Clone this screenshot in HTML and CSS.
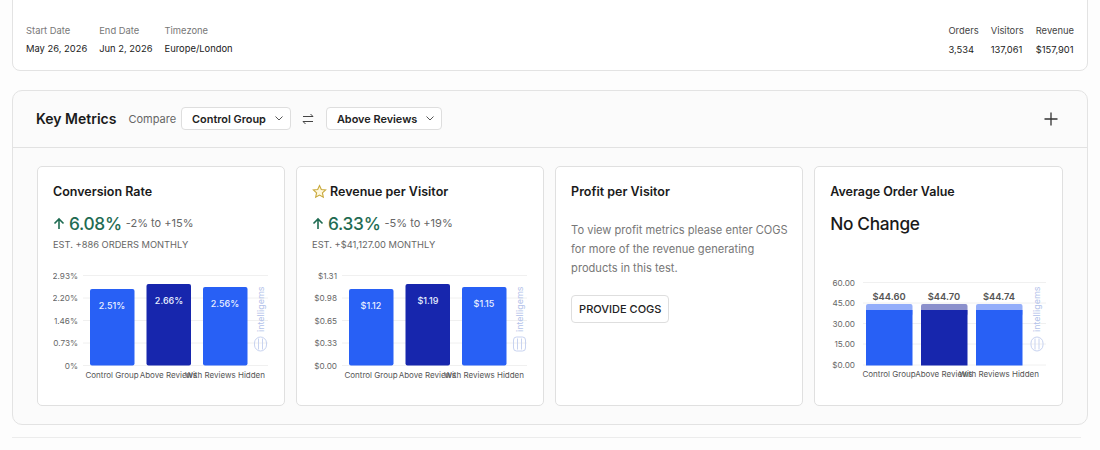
FILE: index.html
```html
<!DOCTYPE html>
<html lang="en">
<head>
    <meta charset="UTF-8">
    <title>Test Results</title>
    <link rel="stylesheet" href="styles.css">
</head>
<body>
    <section class="summary">
        <div class="summary-group">
            <div class="stat"><span class="stat-label">Start Date</span><span class="stat-value">May 26, 2026</span></div>
            <div class="stat"><span class="stat-label">End Date</span><span class="stat-value">Jun 2, 2026</span></div>
            <div class="stat"><span class="stat-label">Timezone</span><span class="stat-value">Europe/London</span></div>
        </div>
        <div class="summary-group totals">
            <div class="stat"><span class="stat-label">Orders</span><span class="stat-value">3,534</span></div>
            <div class="stat"><span class="stat-label">Visitors</span><span class="stat-value">137,061</span></div>
            <div class="stat"><span class="stat-label">Revenue</span><span class="stat-value">$157,901</span></div>
        </div>
    </section>

    <section class="panel">
        <header class="panel-header">
            <h2>Key Metrics</h2>
            <span class="compare-label">Compare</span>
            <button type="button" class="dropdown">Control Group
                <svg width="8" height="5" viewBox="0 0 8 5"><path class="chevron" d="M0.5 0.5L4 4l3.5-3.5"/></svg>
            </button>
            <svg class="swap" width="12" height="12" viewBox="0 0 12 12"><path class="icon-line" d="M1 3.5h10M8.5 1L11 3.5M11 8.5H1M3.5 11L1 8.5"/></svg>
            <button type="button" class="dropdown">Above Reviews
                <svg width="8" height="5" viewBox="0 0 8 5"><path class="chevron" d="M0.5 0.5L4 4l3.5-3.5"/></svg>
            </button>
            <svg class="plus" width="14" height="14" viewBox="0 0 14 14"><path class="plus-line" d="M7 0.5v13M0.5 7h13"/></svg>
        </header>

        <div class="cards">
            <article class="card">
                <h3>Conversion Rate</h3>
                <div class="metric">
                    <svg width="12" height="13" viewBox="0 0 12 13"><path class="arrow" d="M6 12V2M1.5 6.5L6 2l4.5 4.5"/></svg>
                    <span class="metric-value">6.08%</span>
                    <span class="metric-range">-2% to +15%</span>
                </div>
                <p class="estimate">EST. +886 ORDERS MONTHLY</p>
                <svg class="chart" width="216" height="120" viewBox="0 0 216 120">
                    <path class="grid" d="M30 10.5H215M30 33H215M30 55.5H215M30 78H215M30 100.5H215"/>
                    <text class="axis" x="25" y="13.5">2.93%</text>
                    <text class="axis" x="25" y="36">2.20%</text>
                    <text class="axis" x="25" y="58.5">1.46%</text>
                    <text class="axis" x="25" y="81">0.73%</text>
                    <text class="axis" x="25" y="103.5">0%</text>
                    <rect class="bar" x="37" y="24" width="44.5" height="76.5" rx="2"/>
                    <rect class="bar bar-dark" x="93.5" y="19" width="44.5" height="81.5" rx="2"/>
                    <rect class="bar" x="150" y="22" width="44.5" height="78.5" rx="2"/>
                    <text class="bar-text" x="59" y="43.5">2.51%</text>
                    <text class="bar-text" x="116" y="38.5">2.66%</text>
                    <text class="bar-text" x="172" y="41.5">2.56%</text>
                    <text class="tick" x="59" y="112.5">Control Group</text>
                    <text class="tick" x="115.5" y="112.5">Above Reviews</text>
                    <text class="tick" x="172" y="112.5">With Reviews Hidden</text>
                    <text class="brand" transform="translate(211 67) rotate(-90)">intelligems</text>
                    <g class="brand-mark" transform="translate(201.5 72)">
                        <rect x="0" y="0" width="12" height="14" rx="6"/>
                        <path d="M4 1.5v11M8 1.5v11"/>
                    </g>
                </svg>
            </article>

            <article class="card">
                <h3><svg class="star" width="15" height="15" viewBox="0 0 24 24"><path d="M12 2.5l2.9 6.3 6.9.8-5.1 4.7 1.4 6.8-6.1-3.4-6.1 3.4 1.4-6.8-5.1-4.7 6.9-.8z"/></svg>Revenue per Visitor</h3>
                <div class="metric">
                    <svg width="12" height="13" viewBox="0 0 12 13"><path class="arrow" d="M6 12V2M1.5 6.5L6 2l4.5 4.5"/></svg>
                    <span class="metric-value">6.33%</span>
                    <span class="metric-range">-5% to +19%</span>
                </div>
                <p class="estimate">EST. +$41,127.00 MONTHLY</p>
                <svg class="chart" width="216" height="120" viewBox="0 0 216 120">
                    <path class="grid" d="M30 10.5H215M30 33H215M30 55.5H215M30 78H215M30 100.5H215"/>
                    <text class="axis" x="25" y="13.5">$1.31</text>
                    <text class="axis" x="25" y="36">$0.98</text>
                    <text class="axis" x="25" y="58.5">$0.65</text>
                    <text class="axis" x="25" y="81">$0.33</text>
                    <text class="axis" x="25" y="103.5">$0.00</text>
                    <rect class="bar" x="37" y="24" width="44.5" height="76.5" rx="2"/>
                    <rect class="bar bar-dark" x="93.5" y="19" width="44.5" height="81.5" rx="2"/>
                    <rect class="bar" x="150" y="22" width="44.5" height="78.5" rx="2"/>
                    <text class="bar-text" x="59" y="43.5">$1.12</text>
                    <text class="bar-text" x="116" y="38.5">$1.19</text>
                    <text class="bar-text" x="172" y="41.5">$1.15</text>
                    <text class="tick" x="59" y="112.5">Control Group</text>
                    <text class="tick" x="115.5" y="112.5">Above Reviews</text>
                    <text class="tick" x="172" y="112.5">With Reviews Hidden</text>
                    <text class="brand" transform="translate(211 67) rotate(-90)">intelligems</text>
                    <g class="brand-mark" transform="translate(201.5 72)">
                        <rect x="0" y="0" width="12" height="14" rx="3"/>
                        <path d="M4 1.5v11M8 1.5v11"/>
                    </g>
                </svg>
            </article>

            <article class="card">
                <h3>Profit per Visitor</h3>
                <p class="card-note">To view profit metrics please enter COGS for more of the revenue generating products in this test.</p>
                <button type="button" class="cogs-btn">PROVIDE COGS</button>
            </article>

            <article class="card">
                <h3>Average Order Value</h3>
                <div class="metric">
                    <span class="metric-value neutral">No Change</span>
                </div>
                <p class="estimate">&nbsp;</p>
                <svg class="chart" width="216" height="120" viewBox="0 0 216 120">
                    <path class="grid" d="M33 17.5H217M33 38H217M33 58.5H217M33 79H217M33 100H217"/>
                    <text class="axis" x="25" y="20.5">60.00</text>
                    <text class="axis" x="25" y="41">45.00</text>
                    <text class="axis" x="25" y="61.5">30.00</text>
                    <text class="axis" x="25" y="82">15.00</text>
                    <text class="axis" x="25" y="103">$0.00</text>
                    <rect class="bar-cap" x="36" y="39" width="46.5" height="12" rx="2"/>
                    <rect class="bar-cap cap-dark" x="91" y="39" width="46.5" height="12" rx="2"/>
                    <rect class="bar-cap" x="146" y="39" width="46.5" height="12" rx="2"/>
                    <rect class="bar-flat" x="36" y="45" width="46.5" height="55.5"/>
                    <rect class="bar-flat bar-dark" x="91" y="45" width="46.5" height="55.5"/>
                    <rect class="bar-flat" x="146" y="45" width="46.5" height="55.5"/>
                    <text class="bar-top" x="59" y="35">$44.60</text>
                    <text class="bar-top" x="114" y="35">$44.70</text>
                    <text class="bar-top" x="169" y="35">$44.74</text>
                    <text class="tick" x="59" y="111.5">Control Group</text>
                    <text class="tick" x="114" y="111.5">Above Reviews</text>
                    <text class="tick" x="169" y="111.5">With Reviews Hidden</text>
                    <text class="brand" transform="translate(210 67) rotate(-90)">intelligems</text>
                    <g class="brand-mark" transform="translate(201 72)">
                        <rect x="0" y="0" width="12" height="14" rx="6"/>
                        <path d="M4 1.5v11M8 1.5v11"/>
                    </g>
                </svg>
            </article>
        </div>
    </section>

    <hr class="divider">
</body>
</html>
```

FILE: styles.css
```css
* {
    box-sizing: border-box;
}

body {
    margin: 0;
    padding: 0 12px;
    height: 450px;
    overflow: hidden;
    font-family: Inter, "Liberation Sans", sans-serif;
    background: #fdfdfd;
    color: #1a1a1a;
}

/* top strip */
.summary {
    display: flex;
    justify-content: space-between;
    height: 81px;
    margin-top: -10px;
    padding: 34px 13px 0;
    background: #ffffff;
    border: 1px solid #e3e3e3;
    border-radius: 8px;
}

.summary-group {
    display: flex;
    gap: 12px;
}

.stat {
    display: flex;
    flex-direction: column;
    gap: 6px;
    font-size: 9.4px;
    line-height: 12px;
}

.stat-label {
    color: #777777;
}

.stat-value {
    color: #222222;
}

.totals .stat {
    gap: 7px;
}

.totals .stat-label {
    color: #444444;
}

/* key metrics panel */
.panel {
    height: 335px;
    margin-top: 19px;
    background: #fbfbfb;
    border: 1px solid #e3e3e3;
    border-radius: 10px;
}

.panel-header {
    display: flex;
    align-items: center;
    height: 57px;
    padding: 0 29px 1px 23px;
    border-bottom: 1px solid #e2e2e2;
}

.panel-header h2 {
    margin: 0 12px 0 0;
    font-size: 14px;
    font-weight: 600;
}

.compare-label {
    margin-right: 5px;
    font-size: 11px;
    color: #666666;
}

.dropdown {
    display: flex;
    align-items: center;
    justify-content: space-between;
    gap: 9px;
    height: 23px;
    padding: 0 7px 0 10px;
    font-family: inherit;
    font-size: 10.9px;
    font-weight: 600;
    color: #222222;
    background: #ffffff;
    border: 1px solid #dedede;
    border-radius: 4px;
}

.chevron {
    fill: none;
    stroke: #555555;
    stroke-width: 1;
}

.swap {
    margin: 0 12px 0 11px;
}

.icon-line {
    fill: none;
    stroke: #444444;
    stroke-width: 1;
}

.plus {
    margin-left: auto;
}

.plus-line {
    fill: none;
    stroke: #333333;
    stroke-width: 1.3;
}

.cards {
    display: grid;
    grid-template-columns: repeat(4, 1fr);
    gap: 10.7px;
    padding: 18px 24.5px 18px 24px;
}

.card {
    height: 240px;
    padding: 16px 12px 16px 15px;
    background: #ffffff;
    border: 1px solid #e0e0e0;
    border-radius: 5px;
}

.card h3 {
    display: flex;
    align-items: center;
    gap: 3px;
    height: 17px;
    margin: 0;
    font-size: 12.5px;
    font-weight: 600;
}

.star {
    fill: #fff8dc;
    stroke: #c9a93c;
    stroke-width: 1.8;
}

.metric {
    display: flex;
    align-items: center;
    gap: 4px;
    height: 24px;
    margin-top: 11px;
}

.metric-value {
    font-size: 17.3px;
    font-weight: 500;
    letter-spacing: -0.3px;
    color: #1f6b52;
}

.metric-value.neutral {
    color: #1a1a1a;
}

.metric-range {
    font-size: 11px;
    color: #666666;
}

.arrow {
    fill: none;
    stroke: #1f6b52;
    stroke-width: 1.6;
}

.estimate {
    height: 13px;
    margin: 3px 0 0;
    font-size: 9.3px;
    line-height: 13px;
    color: #666666;
}

.chart {
    display: block;
    margin-top: 14px;
}

.grid {
    fill: none;
    stroke: #f0f0f0;
    stroke-width: 1;
}

.axis {
    font-size: 8.2px;
    text-anchor: end;
    fill: #666666;
}

.bar,
.bar-flat {
    fill: #2860f5;
}

.bar.bar-dark,
.bar-flat.bar-dark {
    fill: #1726ad;
}

.bar-cap {
    fill: #94aefa;
}

.bar-cap.cap-dark {
    fill: #8b90cc;
}

.bar-text {
    font-size: 9px;
    font-weight: 500;
    text-anchor: middle;
    fill: #e8eeff;
}

.bar-top {
    font-size: 9.4px;
    font-weight: 600;
    text-anchor: middle;
    fill: #555555;
}

.tick {
    font-size: 8px;
    text-anchor: middle;
    fill: #555555;
}

.brand {
    font-size: 9px;
    fill: #b4c3ea;
}

.brand-mark rect,
.brand-mark path {
    fill: none;
    stroke: #c8d3f0;
    stroke-width: 1;
}

.card-note {
    margin: 21px 0 0;
    font-size: 11.1px;
    line-height: 19px;
    color: #777777;
}

.cogs-btn {
    height: 28px;
    margin-top: 17px;
    padding: 0 7px;
    font-family: inherit;
    font-size: 11px;
    font-weight: 500;
    color: #222222;
    background: #ffffff;
    border: 1px solid #dedede;
    border-radius: 4px;
}

.divider {
    height: 1px;
    margin: 12px 7px 0 0;
    background: #ececec;
    border: none;
}
```
